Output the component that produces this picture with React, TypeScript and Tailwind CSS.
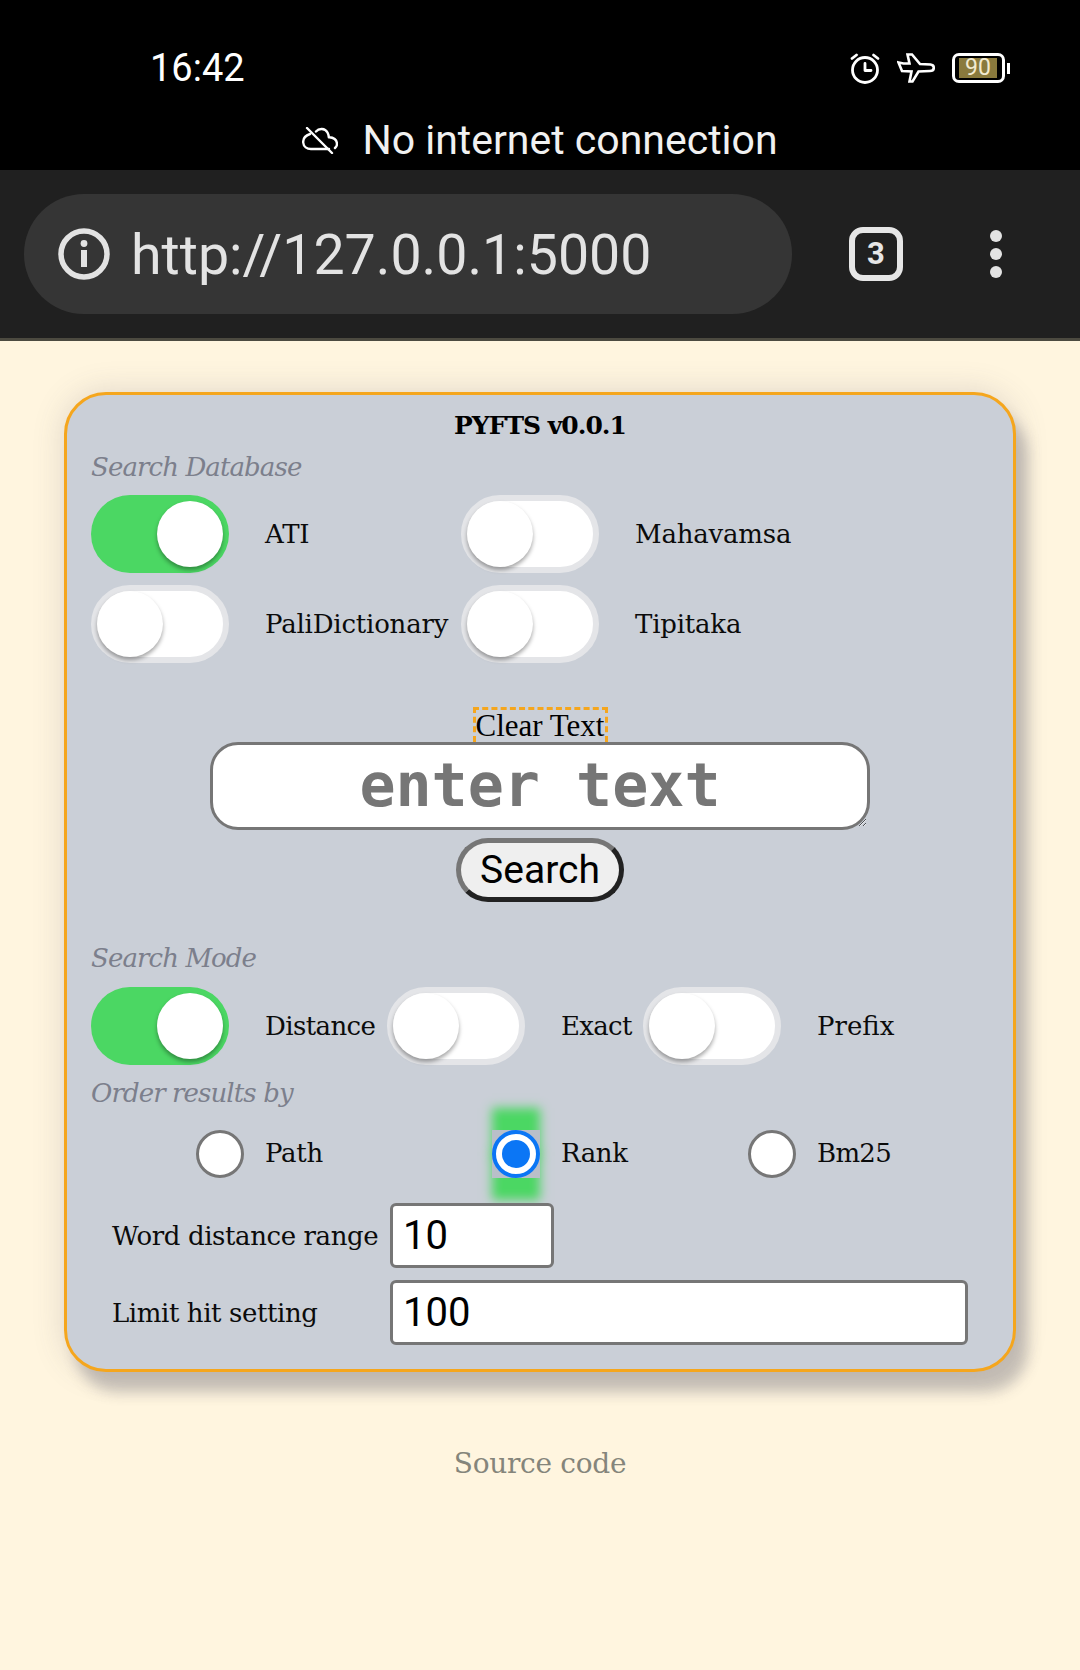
import React from "react";

const serif = "font-['DejaVu_Serif','Liberation_Serif',serif]";

const Toggle = ({ on }: { on?: boolean }) => (
  <div
    className={
      on
        ? "flex h-[78px] w-[138px] shrink-0 items-center justify-end rounded-full bg-[#4bd763] p-[6px]"
        : "flex h-[78px] w-[138px] shrink-0 items-center justify-start rounded-full border-[6px] border-[#e4e5e8] bg-white"
    }
  >
    <div className="h-[66px] w-[66px] rounded-full bg-white shadow-[0_3px_4px_rgba(0,0,0,0.35)]" />
  </div>
);

const Label = ({ className, children }: { className?: string; children: React.ReactNode }) => (
  <span className={`text-[26px] leading-[34px] whitespace-nowrap text-[#0b0b0b] ${serif} ${className ?? ""}`}>
    {children}
  </span>
);

const Heading = ({ className, children }: { className?: string; children: React.ReactNode }) => (
  <div className={`pl-[24px] text-[26px] leading-[34px] tracking-[-0.9px] italic text-[#7c7f8c] ${serif} ${className ?? ""}`}>
    {children}
  </div>
);

const Radio = ({ on }: { on?: boolean }) =>
  on ? (
    <div className="flex h-[48px] w-[48px] shrink-0 items-center justify-center bg-[#b9bfc9] shadow-[0_-22px_10px_#4bd763,0_22px_10px_#4bd763]">
      <div className="flex h-[48px] w-[48px] items-center justify-center rounded-full border-[4px] border-[#0b76f5] bg-white">
        <div className="h-[28px] w-[28px] rounded-full bg-[#0b76f5]" />
      </div>
    </div>
  ) : (
    <div className="h-[48px] w-[48px] shrink-0 rounded-full border-[3px] border-[#767676] bg-white" />
  );

const NumberBox = ({ value, className }: { value: string; className: string }) => (
  <input
    readOnly
    value={value}
    className={`h-[65px] rounded-[6px] border-[3px] border-[#767676] bg-white pl-[10px] font-['Roboto',sans-serif] text-[40px] text-black outline-none ${className}`}
  />
);

const CloudOff = () => (
  <svg width="36" height="27" viewBox="0 0 36 27" fill="none" stroke="#fff" strokeWidth="2.4" strokeLinecap="round" strokeLinejoin="round">
    <path d="M8 7C3.5 8.5 1 12 1.2 15.5 1.5 19.5 5 22 9 22H27" />
    <path d="M14 4.5C17 1 23 1 25.5 5.5 26.5 7.5 26.8 9 26.8 10.2 31.5 10 35 13 35 17 35 18.8 34.2 20 33 21" />
    <path d="M5 1 30 26" />
  </svg>
);

const Alarm = () => (
  <svg width="30" height="31" viewBox="0 0 30 31" fill="none" stroke="#fff" strokeWidth="2.8" strokeLinecap="round" strokeLinejoin="round">
    <circle cx="15" cy="17" r="12.5" />
    <path d="M15 10.5V17.5H21" />
    <path d="M2 5.5 6.5 2" />
    <path d="M28 5.5 23.5 2" />
  </svg>
);

const Plane = () => (
  <svg width="38" height="30" viewBox="0 0 38 30" fill="none" stroke="#fff" strokeWidth="2.6" strokeLinejoin="miter" strokeLinecap="round">
    <path d="M1.5 9.5 6.5 10.5H12.5L10.5 1.5H15L23 11 33.5 11.5C36 11.8 36.8 13.5 36.8 14.8 36.8 16.5 35.5 18 33 18L21.5 18.5 15.5 28.5H12.5L14.5 18.5 5 18Z" />
  </svg>
);

const Battery = () => (
  <div className="flex items-center">
    <div className="flex h-[30px] w-[53px] items-center rounded-[7px] border-[3px] border-white pl-[4px]">
      <div className="flex h-[20px] w-[38px] items-center justify-center bg-[#8a7a3d] font-['Roboto',sans-serif] text-[23px] leading-[20px] text-[#f2ead0]">
        90
      </div>
    </div>
    <div className="ml-[2px] h-[11px] w-[3px] bg-white" />
  </div>
);

const InfoIcon = () => (
  <svg width="52" height="52" viewBox="0 0 52 52" fill="none">
    <circle cx="26" cy="26" r="23" stroke="#e3e3e3" strokeWidth="5.5" />
    <circle cx="26" cy="15.5" r="3.4" fill="#e3e3e3" />
    <rect x="23" y="22" width="6" height="17" fill="#e3e3e3" />
  </svg>
);

export default function App() {
  return (
    <div className="flex min-h-[1670px] w-[1080px] flex-col bg-[#fff5df]">
      <header className="flex h-[170px] flex-col bg-black font-['Roboto',sans-serif] text-white">
        <div className="flex items-center justify-between pt-[51px] pr-[70px] pl-[150px]">
          <span className="text-[38px] leading-[34px]">16:42</span>
          <div className="flex items-center gap-[17px]">
            <Alarm />
            <Plane />
            <Battery />
          </div>
        </div>
        <div className="mt-[30px] flex items-center justify-center gap-[24px]">
          <CloudOff />
          <span className="text-[41px] leading-[50px] text-[#f1f1f1]">No internet connection</span>
        </div>
      </header>

      <div className="flex h-[171px] items-center border-b-[3px] border-[#4c4a40] bg-[#202020] pl-[24px]">
        <div className="flex h-[120px] w-[768px] items-center rounded-full bg-[#353535] pl-[34px]">
          <InfoIcon />
          <span className="ml-[21px] pt-[3px] font-['Roboto',sans-serif] text-[55.5px] text-[#e3e3e3]">http://127.0.0.1:5000</span>
        </div>
        <div className="ml-[57px] flex h-[54px] w-[54px] items-center justify-center rounded-[14px] border-[6px] border-[#e6e6e6] font-['Roboto',sans-serif] text-[31px] font-bold text-[#e6e6e6]">
          3
        </div>
        <div className="ml-[87px] flex flex-col gap-[6px]">
          <div className="h-[12px] w-[12px] rounded-full bg-[#e3e3e3]" />
          <div className="h-[12px] w-[12px] rounded-full bg-[#e3e3e3]" />
          <div className="h-[12px] w-[12px] rounded-full bg-[#e3e3e3]" />
        </div>
      </div>

      <main className="mx-[64px] mt-[51px] flex h-[980px] w-[952px] flex-col rounded-[42px] border-[3px] border-[#f5a61d] bg-[#cacfd7] shadow-[12px_20px_14px_rgba(80,80,100,0.3),0_0_32px_rgba(80,80,100,0.18)]">
        <h1 className={`mt-[14px] text-center text-[25px] leading-[34px] tracking-[-1px] font-bold text-black ${serif}`}>PYFTS v0.0.1</h1>
        <Heading className="mt-[7px]">Search Database</Heading>

        <div className="mt-[11px] flex items-center pl-[24px]">
          <Toggle on />
          <Label className="w-[232px] pl-[36px] tracking-[-0.2px]">ATI</Label>
          <Toggle />
          <Label className="pl-[36px] tracking-[-0.2px]">Mahavamsa</Label>
        </div>
        <div className="mt-[12px] flex items-center pl-[24px]">
          <Toggle />
          <Label className="w-[232px] pl-[36px] tracking-[-0.2px]">PaliDictionary</Label>
          <Toggle />
          <Label className="pl-[36px] tracking-[-0.2px]">Tipitaka</Label>
        </div>

        <button className="mx-auto mt-[44px] flex h-[35px] w-[135px] items-center justify-center border-[3px] border-b-0 border-dashed border-[#f5a61d] font-['Liberation_Serif',serif] text-[31px] leading-[34px] whitespace-nowrap text-black">
          Clear Text
        </button>
        <textarea
          placeholder="enter text"
          className="mx-auto block h-[88px] w-[660px] rounded-[28px] border-[3px] border-[#767676] bg-white pt-[4px] text-center font-['DejaVu_Sans_Mono',monospace] text-[60px] leading-[72px] font-bold outline-none placeholder:text-[#767676]"
        />
        <button className="mx-auto mt-[8px] flex h-[64px] w-[168px] items-center justify-center rounded-full border-[5px] border-t-[#767676] border-r-[#222222] border-b-[#222222] border-l-[#767676] bg-[#efefef] font-['Roboto',sans-serif] text-[39px] text-black">
          Search
        </button>

        <Heading className="mt-[39px]">Search Mode</Heading>
        <div className="mt-[12px] flex items-center pl-[24px]">
          <Toggle on />
          <Label className="w-[158px] pl-[36px] tracking-[-0.6px]">Distance</Label>
          <Toggle />
          <Label className="w-[118px] pl-[36px] tracking-[-0.7px]">Exact</Label>
          <Toggle />
          <Label className="pl-[36px]">Prefix</Label>
        </div>
        <Heading className="mt-[11px]">Order results by</Heading>

        <div className="mt-[20px] flex items-center pl-[129px]">
          <Radio />
          <Label className="mb-[3px] w-[248px] pl-[21px] tracking-[-0.3px]">Path</Label>
          <Radio on />
          <Label className="mb-[3px] w-[208px] pl-[21px] tracking-[-0.4px]">Rank</Label>
          <Radio />
          <Label className="mb-[3px] pl-[21px] tracking-[-0.7px]">Bm25</Label>
        </div>

        <div className="mt-[25px] flex items-center pl-[45px]">
          <Label className="w-[278px] tracking-[-0.4px]">Word distance range</Label>
          <NumberBox value="10" className="w-[164px]" />
        </div>
        <div className="mt-[12px] flex items-center pl-[45px]">
          <Label className="w-[278px] tracking-[-0.4px]">Limit hit setting</Label>
          <NumberBox value="100" className="w-[578px]" />
        </div>
      </main>

      <a className={`mt-[74px] text-center text-[28px] leading-[36px] tracking-[-0.3px] text-[#85857b] ${serif}`}>Source code</a>
    </div>
  );
}
